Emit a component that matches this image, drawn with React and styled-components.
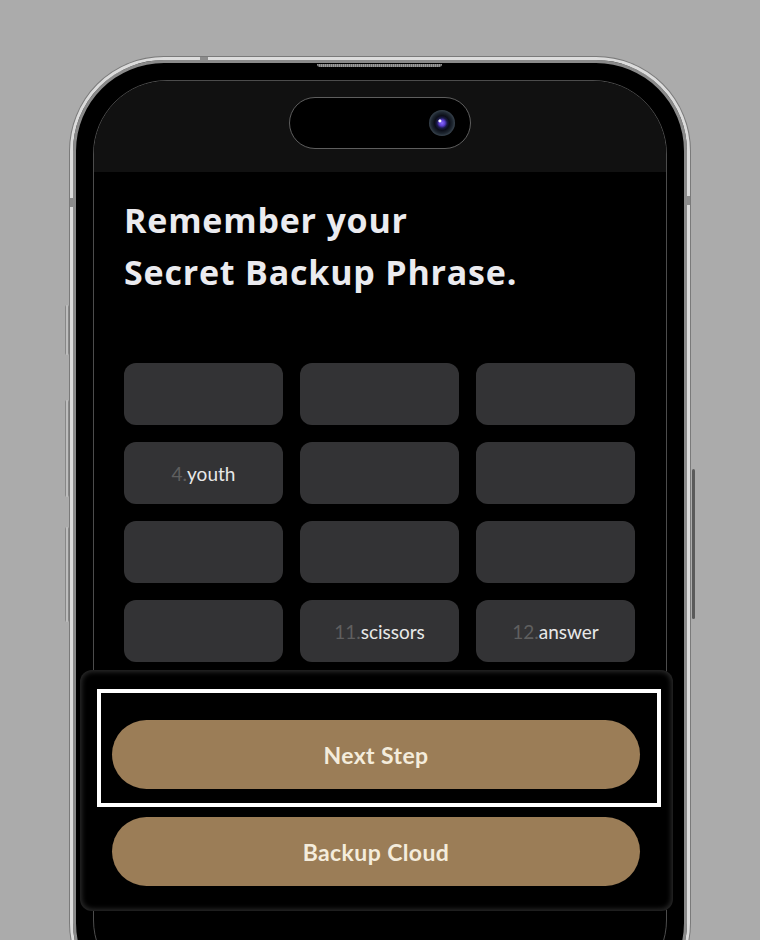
import React from 'react';
import styled, { createGlobalStyle } from 'styled-components';

const GlobalStyle = createGlobalStyle`
  html, body {
    margin: 0;
    padding: 0;
    background: #ababab;
    overflow: hidden;
  }
  body {
    font-family: Lato, 'Open Sans', sans-serif;
  }
  #root {
    padding: 57px 0 0 70px;
  }
`;

const Phone = styled.div`
  position: relative;
  width: 620px;
  height: 960px;
  box-sizing: border-box;
  border-radius: 94px;
  border: 3px solid #dcdcdc;
  box-shadow: 0 0 0 1px #7a7a7a, inset 0 0 0 3px #8a8a8a;
  background: #000;
  padding: 20px;
`;

const Speaker = styled.div`
  position: absolute;
  top: 4px;
  left: 244px;
  width: 125px;
  height: 3px;
  border-radius: 0 0 3px 3px;
  background: repeating-linear-gradient(90deg, #9a9a9a 0 1px, #6e6e6e 1px 2px);
`;

const Antenna = styled.span`
  position: absolute;
  background: #8c8c8c;
  ${({ $side }) =>
    $side === 'top'
      ? 'top: -3px; left: 127px; width: 8px; height: 4px;'
      : $side === 'left'
      ? 'left: -3px; top: 138px; width: 4px; height: 9px;'
      : 'right: -3px; top: 136px; width: 4px; height: 9px;'}
`;

const SideButton = styled.span`
  position: absolute;
  width: 4px;
  border-radius: 2px;
  top: ${({ $top }) => $top}px;
  height: ${({ $height }) => $height}px;
  ${({ $right }) =>
    $right
      ? 'right: -8px; width: 3px; background: #5a5a5a;'
      : 'left: -8px; background: linear-gradient(90deg, #6c6c6c, #d8d8d8 50%, #6c6c6c);'}
`;

const Screen = styled.div`
  height: 100%;
  box-sizing: border-box;
  border: 1px solid #4c4c4c;
  border-radius: 74px;
  background: #000;
  overflow: hidden;
  display: flex;
  flex-direction: column;
`;

const StatusArea = styled.div`
  height: 91px;
  flex-shrink: 0;
  background: #111;
  display: flex;
  justify-content: center;
  padding-top: 16px;
  box-sizing: border-box;
`;

const Island = styled.div`
  width: 182px;
  height: 52px;
  box-sizing: border-box;
  border: 1px solid #5e5e5e;
  border-radius: 26px;
  background: #000;
  display: flex;
  align-items: center;
  justify-content: flex-end;
  padding-right: 15px;
`;

const Camera = styled.div`
  width: 26px;
  height: 26px;
  border-radius: 50%;
  background: radial-gradient(
      circle at 42% 42%,
      #ffffff 0 5%,
      transparent 9%
    ),
    radial-gradient(
      circle at 50% 50%,
      #8a6cff 0,
      #5a3cd0 16%,
      #1a1a48 28%,
      #0b0e18 40%,
      #1e2731 58%,
      #3f4a55 74%,
      #1a2028 88%,
      #0a0c10 100%
    );
`;

const Content = styled.div`
  padding: 22px 30px 0 30px;
  display: flex;
  flex-direction: column;
`;

const Title = styled.h1`
  margin: 0;
  font-family: 'Open Sans', sans-serif;
  font-weight: 700;
  font-size: 34px;
  line-height: 52px;
  color: #ebebef;
  letter-spacing: 0.8px;
`;

const WordGrid = styled.div`
  margin-top: 65px;
  display: grid;
  grid-template-columns: repeat(3, 159px);
  grid-auto-rows: 62px;
  column-gap: 17px;
  row-gap: 17px;
`;

const WordCell = styled.div`
  background: #333335;
  border-radius: 12px;
  display: flex;
  align-items: center;
  justify-content: center;
  font-size: 19px;
  color: #e8e8e8;
`;

const WordIndex = styled.span`
  color: #5f5f5f;
`;

const Sheet = styled.div`
  position: absolute;
  left: 7px;
  top: 610px;
  width: 593px;
  height: 241px;
  box-sizing: border-box;
  background: #000;
  border-radius: 12px;
  box-shadow: inset 0 0 5px 2px #2a2a2a;
  display: flex;
  flex-direction: column;
  align-items: flex-start;
  padding: 19px 0 0 17px;
`;

const Highlight = styled.div`
  width: 564px;
  height: 118px;
  box-sizing: border-box;
  border: 4px solid #ffffff;
  padding: 27px 0 0 11px;
`;

const PillButton = styled.button`
  width: 528px;
  height: 69px;
  border: none;
  border-radius: 35px;
  background: #9b7d57;
  color: #f4ecdc;
  font-family: Lato, sans-serif;
  font-weight: 700;
  font-size: 23px;
  letter-spacing: 0.4px;
  margin-left: ${({ $offset }) => $offset || 0}px;
  margin-top: ${({ $gap }) => $gap || 0}px;
`;

const words = ['', '', '', 'youth', '', '', '', '', '', '', 'scissors', 'answer'];

export default function App() {
  return (
    <>
      <GlobalStyle />
      <Phone>
        <Speaker />
        <Antenna $side="top" />
        <Antenna $side="left" />
        <Antenna $side="right" />
        <SideButton $top={245} $height={50} />
        <SideButton $top={340} $height={97} />
        <SideButton $top={467} $height={95} />
        <SideButton $right $top={409} $height={150} />
        <Screen>
          <StatusArea>
            <Island>
              <Camera />
            </Island>
          </StatusArea>
          <Content>
            <Title>
              Remember your
              <br />
              Secret Backup Phrase.
            </Title>
            <WordGrid>
              {words.map((word, i) => (
                <WordCell key={i}>
                  {word && (
                    <>
                      <WordIndex>{i + 1}.</WordIndex>
                      {word}
                    </>
                  )}
                </WordCell>
              ))}
            </WordGrid>
          </Content>
        </Screen>
        <Sheet>
          <Highlight>
            <PillButton>Next Step</PillButton>
          </Highlight>
          <PillButton $offset={15} $gap={10}>
            Backup Cloud
          </PillButton>
        </Sheet>
      </Phone>
    </>
  );
}
